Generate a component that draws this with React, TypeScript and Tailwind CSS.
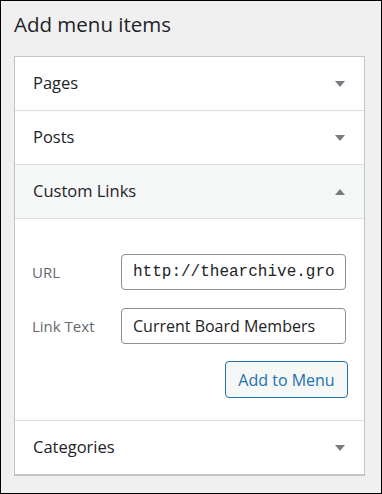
import React from "react";

const font = { fontFamily: '"Open Sans", "Noto Sans", sans-serif' };

const Arrow = ({ up = false }: { up?: boolean }) => (
  <svg width="10" height="6" viewBox="0 0 10 6" className="shrink-0">
    {up ? <polygon points="0,6 10,6 5,0" fill="#787c82" /> : <polygon points="0,0 10,0 5,6" fill="#787c82" />}
  </svg>
);

const Row = ({ title, up = false, active = false }: { title: string; up?: boolean; active?: boolean }) => (
  <div
    className={`flex h-[53px] items-center justify-between pl-[18px] pr-[19px] text-[16.5px] text-[#1d2327] ${
      active ? "bg-[#f6f7f7]" : "bg-white"
    }`}
  >
    <span>{title}</span>
    <Arrow up={up} />
  </div>
);

export default function App() {
  return (
    <div className="h-[494px] w-[382px] border border-black bg-[#f0f0f0] pl-[13px] pr-[16px]" style={font}>
      <h2 className="pt-[9px] text-[20.5px] leading-[28px] text-[#1d2327]">Add menu items</h2>
      <div className="mt-[18px] border border-[#c3c4c7] border-b-2 bg-white">
        <Row title="Pages" />
        <div className="h-px bg-[#dcdcde]" />
        <Row title="Posts" />
        <div className="h-px bg-[#dcdcde]" />
        <Row title="Custom Links" up active />
        <div className="h-px bg-[#dcdcde]" />
        <div className="flex flex-col pb-[22px] pl-[17px] pr-[16px] pt-[35px]">
          <div className="flex items-center">
            <span className="w-[89px] text-[15px] text-[#646970]">URL</span>
            <div className="flex h-[36px] w-[225px] items-center overflow-hidden whitespace-nowrap rounded-[4px] border border-[#8c8f94] pl-[11px] text-[16px] text-[#1d2327]" style={{ fontFamily: '"Liberation Mono", monospace' }}>
              http://thearchive.gro
            </div>
          </div>
          <div className="mt-[18px] flex items-center">
            <span className="w-[89px] text-[15px] text-[#646970]">Link Text</span>
            <div className="flex h-[36px] w-[225px] items-center overflow-hidden whitespace-nowrap rounded-[4px] border border-[#8c8f94] pl-[11px] text-[16px] text-[#1d2327]">
              Current Board Members
            </div>
          </div>
          <div className="mt-[17px] flex justify-end">
            <button className="h-[37px] w-[123px] rounded-[4px] border border-[#2271b1] bg-[#f6f7f7] text-[16px] text-[#2271b1]">
              Add to Menu
            </button>
          </div>
        </div>
        <div className="h-px bg-[#dcdcde]" />
        <Row title="Categories" />
      </div>
    </div>
  );
}
